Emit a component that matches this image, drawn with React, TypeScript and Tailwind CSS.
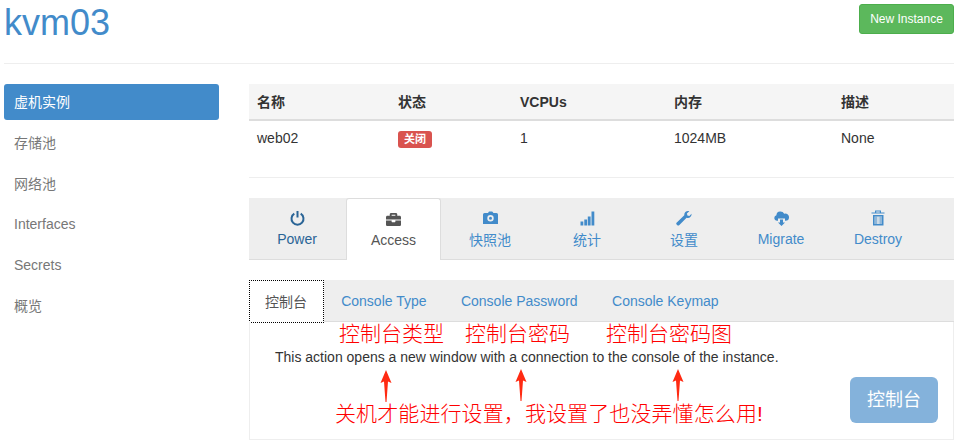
import React from 'react';
import { FaBriefcase } from 'react-icons/fa';

const font = "font-['Liberation_Sans','Noto_Sans_CJK_SC',sans-serif]";

function PowerIcon() {
  return (
    <svg width="15" height="16" viewBox="0 0 15 16" fill="none" stroke="currentColor" strokeWidth="2">
      <path d="M4.3 3.6a6 6 0 1 0 6.4 0" />
      <path d="M7.5 1v6.5" />
    </svg>
  );
}

function CameraIcon() {
  return (
    <svg width="15" height="14" viewBox="0 0 15 14" fill="currentColor">
      <path
        fillRule="evenodd"
        d="M5 2L6 .5h3.2L10.5 2h3A1.5 1.5 0 0 1 15 3.5V13H0V3.5A1.5 1.5 0 0 1 1.5 2zM7.5 4a3.2 3.2 0 1 0 0 6.4 3.2 3.2 0 0 0 0-6.4zM7.5 5.7a1.5 1.5 0 1 1 0 3 1.5 1.5 0 0 1 0-3z"
      />
    </svg>
  );
}

function SignalIcon() {
  return (
    <svg width="15" height="15" viewBox="0 0 15 15" fill="currentColor">
      <rect x="0.5" y="10.5" width="2.8" height="4" />
      <rect x="4.3" y="8.5" width="2.8" height="6" />
      <rect x="7.8" y="5.5" width="2.8" height="9" />
      <rect x="11.5" y="0.5" width="2.8" height="14" />
    </svg>
  );
}

function WrenchIcon() {
  return (
    <svg width="16" height="15" viewBox="0 0 16 15" fill="currentColor">
      <path d="M15.5 2.8c.3 2.2-1.3 4.2-3.5 4.2-.5 0-1 0-1.4-.2L3.4 14a1.6 1.6 0 0 1-2.3 0L.8 13.7a1.6 1.6 0 0 1 0-2.3L8.3 4.300C8 2 9.800 0 12 0c.5 0 1 .1 1.300.2L10.900 2.500l.5 2 2 .5z" />
    </svg>
  );
}

function CloudDownIcon() {
  return (
    <svg width="15" height="15" viewBox="0 0 15 15" fill="currentColor">
      <path d="M4 9.8H2.800a2.800 2.800 0 0 1-.4-5.500A4 4 0 0 1 6 .5a4.300 4.300 0 0 1 4.200 2.300 3.500 3.500 0 0 1 4.800 3.400 3.500 3.500 0 0 1-3.500 3.600H11V7.500H4z" />
      <path d="M6 8.500h3v3h2L7.500 15 4 11.500h2z" />
    </svg>
  );
}

function TrashIcon() {
  return (
    <svg width="14" height="16" viewBox="0 0 14 16">
      <path fill="currentColor" d="M4 .5h6v2h3.500v1H.5v-1H4zM5.200 1.500v1h3.600v-1z" fillRule="evenodd" />
      <path fill="currentColor" d="M2 5h10.500v10.500H2zM3.500 6.500v7.500h7.500V6.500z" fillRule="evenodd" />
      <path fill="currentColor" fillOpacity="0.55" d="M3.500 6.500H6V14H3.500zM8.500 6.500H11V14H8.500z" />
      <path fill="currentColor" fillOpacity="0.2" d="M6 6.500h2.500V14H6z" />
    </svg>
  );
}

function Arrow({ className }: { className: string }) {
  return (
    <svg className={`absolute ${className}`} width="12" height="32" viewBox="0 0 12 32" fill="#ff2a12">
      <path d="M6 0L11.500 13L8 11.500L6.500 32H5.500L4 11.500L.5 13z" />
    </svg>
  );
}

const navItems = ['存储池', '网络池', 'Interfaces', 'Secrets', '概览'];

const tabs = [
  { label: 'Power', icon: <PowerIcon />, cls: 'pr-[1px] text-[#2a6496]', labelCls: 'mt-[3px]' },
  { label: 'Access', icon: <FaBriefcase size={15} />, cls: 'text-[#555]', labelCls: 'mt-[3px]', active: true },
  { label: '快照池', icon: <CameraIcon />, cls: 'pl-[1px] text-[#428bca]', labelCls: 'mt-[4px]' },
  { label: '统计', icon: <SignalIcon />, cls: 'pl-[1px] text-[#428bca]', labelCls: 'mt-[4px]' },
  { label: '设置', icon: <WrenchIcon />, cls: 'pl-[1px] text-[#428bca]', labelCls: 'mt-[4px]' },
  { label: 'Migrate', icon: <CloudDownIcon />, cls: 'pl-[1px] text-[#428bca]', labelCls: 'mt-[3px]' },
  { label: 'Destroy', icon: <TrashIcon />, cls: 'pl-[1px] text-[#428bca]', labelCls: 'mt-[3px]' },
];

const subTabs = ['Console Type', 'Console Password', 'Console Keymap'];

export default function App() {
  return (
    <div className={`${font} h-[440px] w-[957px] overflow-hidden bg-white px-1 text-sm text-[#333]`}>
      <div className="w-[950px]">
        <div className="flex h-[64px] items-start justify-between border-b border-[#eee]">
          <h1 className="mt-[3px] text-[36px] leading-10 font-normal text-[#428bca]">kvm03</h1>
          <button className="mt-1 h-[30px] w-[95px] rounded-[3px] border border-[#4cae4c] bg-[#5cb85c] text-xs font-normal text-white">
            New Instance
          </button>
        </div>

        <div className="mt-5 flex">
          <div className="flex w-[215px] shrink-0 flex-col">
            <a className="mb-[3px] flex h-9 items-center rounded-[3px] bg-[#428bca] px-[10px] text-white">虚机实例</a>
            {navItems.map((item) => (
              <a key={item} className="flex h-[40.6px] items-center px-[10px] text-[#777]">
                {item}
              </a>
            ))}
          </div>

          <div className="ml-[30px] w-[705px]">
            <div className="grid h-[37px] grid-cols-[141px_122px_154px_167px_121px] items-center border-b-2 border-[#ddd] bg-[#f5f5f5] px-2 font-bold">
              <div>名称</div>
              <div>状态</div>
              <div>VCPUs</div>
              <div>内存</div>
              <div>描述</div>
            </div>
            <div className="grid h-[57px] grid-cols-[141px_122px_154px_167px_121px] border-b border-[#eee] px-2 pt-[7px]">
              <div>web02</div>
              <div>
                <span className="mt-[3px] inline-block rounded-[3px] bg-[#d9534f] px-[6px] text-[11px] leading-[17px] font-bold text-white">
                  关闭
                </span>
              </div>
              <div>1</div>
              <div>1024MB</div>
              <div>None</div>
            </div>

            <div className="mt-5 flex h-[62px] border-b border-[#ddd] bg-[#eee]">
              {tabs.map((tab) => (
                <div
                  key={tab.label}
                  className={
                    tab.active
                      ? `mb-[-1px] flex h-[62px] w-[95px] flex-col items-center rounded-t-[3px] border border-b-0 border-[#ddd] bg-white pt-[12px] ${tab.cls}`
                      : `flex h-[61px] w-[97px] flex-col items-center pt-[12px] ${tab.cls}`
                  }
                >
                  <span className="flex h-4 items-center">{tab.icon}</span>
                  <span className={`${tab.labelCls} leading-5`}>{tab.label}</span>
                </div>
              ))}
            </div>

            <div className="mt-5 flex h-[42px] border-b border-[#ddd] bg-[#eee]">
              <div className="flex h-[43px] w-[75px] items-center justify-center border border-dotted border-black bg-white pr-[1px] text-[#555]">
                控制台
              </div>
              {subTabs.map((t) => (
                <div key={t} className="flex items-center px-[17.2px] text-[#428bca]">
                  {t}
                </div>
              ))}
            </div>

            <div className="relative h-[118px] border-x border-b border-[#eee]">
              <p className="absolute top-[26px] left-[25px] leading-[18px]">
                This action opens a new window with a connection to the console of the instance.
              </p>
              <button className="absolute top-[55px] right-[15px] h-[46px] w-[88px] rounded-[6px] bg-[#84b2db] text-lg text-white">
                控制台
              </button>

              <span className="absolute top-0 left-[89px] text-[21px] leading-6 font-light text-[#ff0000]">控制台类型</span>
              <span className="absolute top-0 left-[215px] text-[21px] leading-6 font-light text-[#ff0000]">控制台密码</span>
              <span className="absolute top-0 left-[356px] text-[21px] leading-6 font-light text-[#ff0000]">控制台密码图</span>
              <Arrow className="top-[48px] left-[130px]" />
              <Arrow className="top-[47px] left-[265px]" />
              <Arrow className="top-[47px] left-[422px]" />
              <span className="absolute top-[80px] left-[85px] text-[21px] leading-6 font-light tracking-[0.1px] whitespace-nowrap text-[#ff0000]">
                关机才能进行设置，我设置了也没弄懂怎么用!
              </span>
            </div>
          </div>
        </div>
      </div>
    </div>
  );
}
